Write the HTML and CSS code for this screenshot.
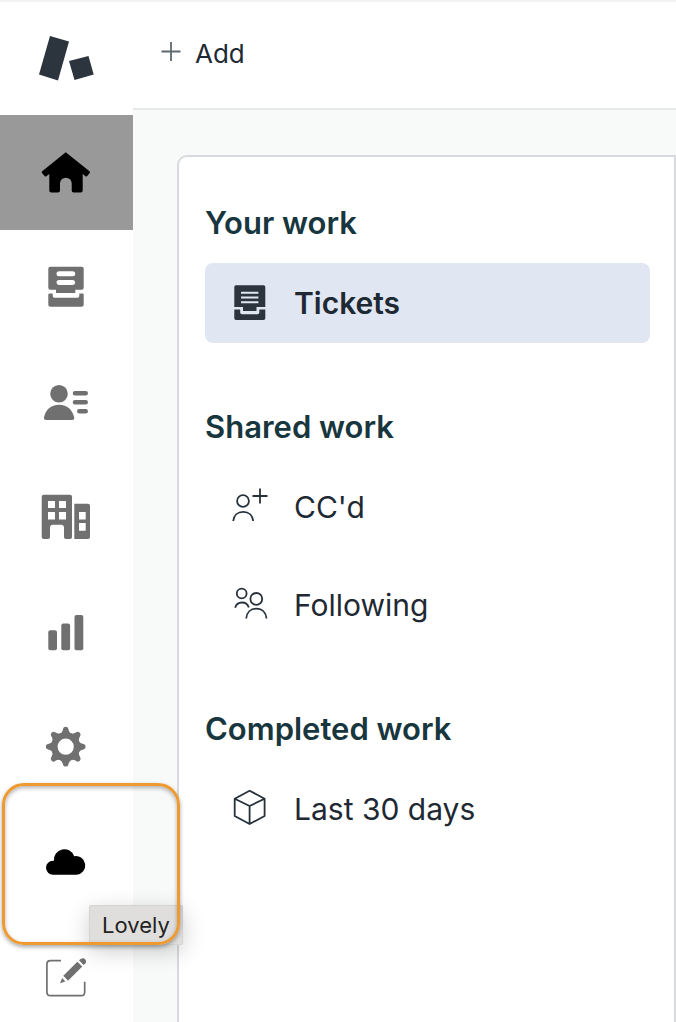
FILE: index.html
```html
<!DOCTYPE html>
<html lang="en">
<head>
<meta charset="utf-8">
<meta name="viewport" content="width=device-width, initial-scale=1">
<title>Your work</title>
<link rel="stylesheet" href="styles.css">
</head>
<body>
<div class="app">
  <nav class="rail" aria-label="Main">
    <div class="brand">
      <svg width="55" height="45" viewBox="0 0 55 45" fill="#2c343d" aria-hidden="true"><path d="M11 0 30 5.500 19 44.500 0 38.500Z"/><path d="M30 25 49.500 20 54.700 38.500 35.500 44Z"/></svg>
    </div>
    <button class="rail-item is-active" type="button" aria-label="Home">
      <svg class="rail-icon" viewBox="0 0 51 51"><path d="M24.700 5.300 48.500 24.200Q49.400 25 48.700 25.900L46 29.200Q45.300 29.900 44.500 29.200L41.700 27V43.500Q41.700 45.500 39.700 45.500H32.700Q30.700 45.500 30.700 43.500V36.500A5.850 5.850 0 0 0 19 36.500V43.500Q19 45.500 17 45.500H10.300Q8.300 45.500 8.300 43.500V27L5.300 29.200Q4.500 29.900 3.800 29.200L1 25.900Q.4 25 1.200 24.200Z"/></svg>
    </button>
    <button class="rail-item" type="button" aria-label="Views">
      <svg class="rail-icon" viewBox="0 0 51 51"><path fill-rule="evenodd" d="M9.300 4.700H40.700Q42.700 4.700 42.700 6.700V25.700Q42.700 27.700 40.700 27.700H34.300V31H15V27.700H9.300Q7.300 27.700 7.300 25.700V6.700Q7.300 4.700 9.300 4.700ZM18 9.300a2.500 2.500 0 0 0 0 5H31.700a2.500 2.500 0 0 0 0-5ZM18 18a2.500 2.500 0 0 0 0 5H31.700a2.500 2.500 0 0 0 0-5Z"/><path d="M8.500 31.500H11.700V34Q11.700 35.700 13.400 35.700H36.600Q38.300 35.700 38.300 34V31.500H41.500Q42.700 31.500 42.700 32.700V42.700Q42.700 44.700 40.700 44.700H9.300Q7.300 44.700 7.300 42.700V32.700Q7.300 31.500 8.500 31.500Z"/></svg>
    </button>
    <button class="rail-item" type="button" aria-label="Customers">
      <svg class="rail-icon" viewBox="0 0 51 51"><circle cx="18" cy="16.700" r="8.800"/><path d="M5 43Q2.700 43 3 40.500C4.500 32.500 10 27.700 18 27.700S31.500 32.500 33.200 40.500Q33.500 43 31 43Z"/><path d="M34 16.300H44.700M34 25.200H44.700M38.300 34.200H44.700" fill="none" stroke="currentColor" stroke-width="4.600" stroke-linecap="round"/></svg>
    </button>
    <button class="rail-item" type="button" aria-label="Organizations">
      <svg class="rail-icon" viewBox="0 0 51 51"><path fill-rule="evenodd" d="M2.700 2.700H29Q31 2.700 31 4.700V45Q31 47 29 47H25Q23 47 23 45V35.700Q23 32.700 20 32.700H12Q9 32.700 9 35.700V45Q9 47 7 47H2.700Q.7 47 .7 45V4.700Q.7 2.700 2.700 2.700ZM7 9V16H14V9ZM18 9V16H25V9ZM7 20V27.600H14V20ZM18 20V27.600H25V20ZM33.300 11.700H47Q49 11.700 49 13.700V45Q49 47 47 47H33.300ZM38 20V27.600H44.700V20ZM38 31V38.700H44.700V31Z"/></svg>
    </button>
    <button class="rail-item" type="button" aria-label="Reporting">
      <svg class="rail-icon" viewBox="0 0 51 51"><rect x="7.300" y="23.200" width="8.700" height="20" rx="2"/><rect x="20.300" y="16.500" width="8.800" height="26.700" rx="2"/><rect x="33.500" y="8" width="8.800" height="35.200" rx="2"/></svg>
    </button>
    <button class="rail-item" type="button" aria-label="Admin">
      <svg class="rail-icon" viewBox="0 0 51 51"><defs><path id="tooth" d="M18 12.500Q21.500 10.500 22 7Q22.300 4.800 24.700 4.800T27.400 7Q27.900 10.500 31.400 12.500Z"/></defs><circle cx="24.700" cy="24.700" r="11.300" fill="none" stroke="currentColor" stroke-width="6.400"/><use href="#tooth"/><use href="#tooth" transform="rotate(45 24.700 24.700)"/><use href="#tooth" transform="rotate(90 24.700 24.700)"/><use href="#tooth" transform="rotate(135 24.700 24.700)"/><use href="#tooth" transform="rotate(180 24.700 24.700)"/><use href="#tooth" transform="rotate(225 24.700 24.700)"/><use href="#tooth" transform="rotate(270 24.700 24.700)"/><use href="#tooth" transform="rotate(315 24.700 24.700)"/></svg>
    </button>
    <button class="rail-item is-hovered" type="button" aria-label="Lovely" aria-describedby="lovely-tip">
      <svg class="rail-icon" viewBox="0 0 51 51"><path d="M12 37.700A7 7 0 0 1 12 23.700L13 23.700A10.400 10.400 0 0 1 33.200 19.300A9.300 9.300 0 1 1 35.700 37.700Z"/></svg>
      <span class="tooltip" role="tooltip" id="lovely-tip">Lovely</span>
      <span class="callout"></span>
    </button>
    <button class="rail-item" type="button" aria-label="Compose">
      <svg class="rail-icon" viewBox="0 0 51 51"><path d="M20 8.700H9.500Q5.900 8.700 5.900 12.300V40Q5.900 43.700 9.500 43.700H40Q43.700 43.700 43.700 40V29.700" fill="none" stroke="currentColor" stroke-width="1.700"/><path d="M22.300 23.700 36.300 9.700 41.300 14.500 27 28.700ZM21.200 26 24.400 29.500 19 31.300ZM38 8.300Q42 4.500 44.300 7.500T42.600 12.900Z"/></svg>
    </button>
  </nav>

  <div class="page">
    <header class="topbar">
      <button class="add" type="button">
        <svg class="add-icon" viewBox="0 0 20 20" width="20" height="20" fill="none" stroke="#5c6970" stroke-width="1.800"><path d="M10 0V19M.5 9.500H19.500"/></svg>
        Add
      </button>
    </header>
    <main class="content">
      <div class="card">
        <section class="group">
          <h2 class="group-title">Your work</h2>
          <a class="entry is-selected" href="#tickets">
            <svg class="entry-icon" viewBox="0 0 40 40"><path fill="#2c343d" d="M7 2.300H34.600Q36.300 2.300 36.300 4V24H27.500V28H14V24H5.300V4Q5.300 2.300 7 2.300ZM5.300 26.500H11.200V29.500Q11.200 31.300 13 31.300H28.500Q30.300 31.300 30.300 29.500V26.500H36.300V35.300Q36.300 37 34.600 37H7Q5.300 37 5.300 35.300Z"/><path d="M12 9.800H29.400M12 14.500H29.400M12 19.200H29.400" stroke="#e0e7f3" stroke-width="2"/></svg>
            Tickets
          </a>
        </section>
        <section class="group">
          <h2 class="group-title">Shared work</h2>
          <a class="entry" href="#ccd">
            <svg class="entry-icon" viewBox="0 0 40 40"><circle cx="14" cy="14" r="5.900"/><path d="M4.200 34C4.700 28.500 8.500 24.800 14.200 24.800S23.700 28.500 24.200 34M31 1.500V16.500M23.500 9H38.500"/></svg>
            CC'd
          </a>
          <a class="entry" href="#following">
            <svg class="entry-icon" viewBox="0 0 40 40"><circle cx="12.700" cy="8.500" r="4.900"/><circle cx="27.300" cy="13.900" r="5.900"/><path d="M6.200 22.800C7 19.200 9.500 17.500 13 17.500S18.800 19.200 19.800 22.500M17.200 33.500C17.700 27.500 21.500 23.700 27.300 23.700S37 27.500 37.500 33.500"/></svg>
            Following
          </a>
        </section>
        <section class="group">
          <h2 class="group-title">Completed work</h2>
          <a class="entry" href="#last-30-days">
            <svg class="entry-icon" viewBox="0 0 40 40"><path stroke-linejoin="round" d="M20.600 1.700 35.600 9.700V27L20.600 35 5.700 27V9.700ZM5.700 9.700 20.600 17 35.600 9.700M20.600 17V35"/></svg>
            Last 30 days
          </a>
        </section>
      </div>
    </main>
  </div>
</div>
</body>
</html>
```
FILE: styles.css
```css
* {
  box-sizing: border-box;
}

body {
  margin: 0;
  background: #fff;
  color: #1f2933;
  font-family: Inter, "Liberation Sans", sans-serif;
  font-size: 30px;
}

button {
  margin: 0;
  padding: 0;
  border: 0;
  background: none;
  color: inherit;
  font: inherit;
}

svg {
  display: block;
  flex: none;
}

.app {
  display: flex;
  height: 100vh;
  overflow: hidden;
  border-top: 2px solid #f3f3f3;
}

.rail {
  position: relative;
  z-index: 1;
  display: flex;
  flex-direction: column;
  flex: none;
  width: 133px;
  background: #fff;
}

.brand {
  display: flex;
  flex: none;
  align-items: center;
  justify-content: center;
  height: 113px;
}

.rail-item {
  position: relative;
  display: flex;
  flex: none;
  align-items: center;
  justify-content: center;
  height: 115px;
  color: #707070;
}

.rail-item.is-active {
  background: #999;
  color: #000;
}

.rail-item.is-hovered {
  z-index: 1;
  color: #000;
}

.rail-icon {
  width: 51px;
  height: 51px;
  fill: currentColor;
}

.tooltip {
  position: absolute;
  top: 100px;
  left: 89px;
  padding: 0 12px;
  border: 1px solid #d4d4d3;
  border-radius: 2px;
  background: #dfdedd;
  color: #222;
  font-size: 22px;
  line-height: 38px;
  box-shadow: 0 6px 22px rgba(0, 0, 0, 0.2);
}

.callout {
  position: absolute;
  top: -22px;
  left: 2px;
  width: 178px;
  height: 162px;
  border: 3px solid #ee9a30;
  border-radius: 22px;
  box-shadow: 0 2px 4px rgba(0, 0, 0, 0.35), inset 0 2px 4px rgba(0, 0, 0, 0.3);
}

.page {
  display: flex;
  flex: 1;
  flex-direction: column;
  min-width: 0;
}

.topbar {
  display: flex;
  flex: none;
  align-items: center;
  height: 108px;
  padding: 0 28px 2px;
  border-bottom: 2px solid #e6e8e9;
}

.add {
  display: flex;
  align-items: center;
  gap: 14px;
  font-size: 26px;
  line-height: 32px;
}

.add-icon {
  margin-bottom: 4px;
}

.content {
  display: flex;
  flex: 1;
  flex-direction: column;
  padding: 45px 0 0 44px;
  background: #f8faf9;
}

.card {
  display: flex;
  flex: 1;
  flex-direction: column;
  gap: 66px;
  padding: 48px 24px 48px 26px;
  border: 2px solid #d8dadd;
  border-bottom: 0;
  border-radius: 10px 0 0 0;
  background: #fff;
}

.group {
  display: flex;
  flex-direction: column;
  gap: 18px;
}

.group-title {
  margin: 0 0 4px;
  color: #17363d;
  font-size: 31px;
  font-weight: 600;
  line-height: 36px;
}

.entry {
  display: flex;
  align-items: center;
  gap: 25px;
  height: 80px;
  padding: 0 24px;
  border-radius: 8px;
  color: inherit;
  text-decoration: none;
}

.entry.is-selected {
  background: #e0e7f3;
  font-weight: 600;
}

.entry-icon {
  width: 40px;
  height: 40px;
  fill: none;
  stroke-width: 1.8;
}

.entry:not(.is-selected) .entry-icon {
  stroke: #27313b;
}
```
